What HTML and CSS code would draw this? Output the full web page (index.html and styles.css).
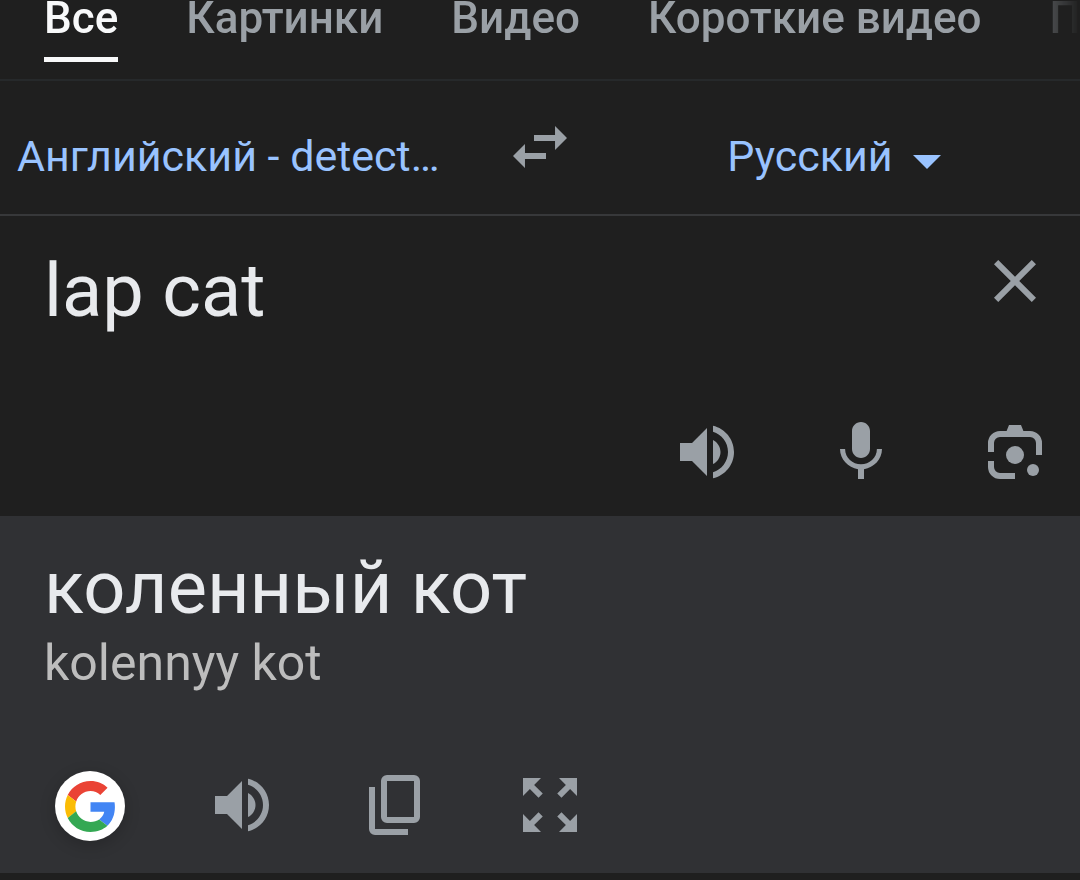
FILE: index.html
```html
<!DOCTYPE html>
<html lang="ru">
<head>
<meta charset="utf-8">
<meta name="viewport" content="width=device-width, initial-scale=1">
<title>lap cat</title>
<link rel="stylesheet" href="styles.css">
</head>
<body>
<nav class="tabs">
  <a class="tab tab-active" href="#" aria-current="page">Все</a>
  <a class="tab" href="#">Картинки</a>
  <a class="tab" href="#">Видео</a>
  <a class="tab" href="#">Короткие видео</a>
  <a class="tab" href="#">П</a>
</nav>
<main class="translator">
  <div class="languages">
    <button class="language language-source" type="button">Английский - detect…</button>
    <button class="icon-button" type="button" aria-label="Поменять языки">
      <svg class="icon" viewBox="0 0 24 24"><path d="M6.99 11L3 15l3.99 4v-3H14v-2H6.99v-3zM21 9l-3.99-4v3H10v2h7.01v3L21 9z"/></svg>
    </button>
    <button class="language language-target" type="button">Русский
      <svg class="caret" viewBox="0 0 28 14"><path d="M0 0h28L14 14z"/></svg>
    </button>
  </div>
  <section class="source">
    <div class="entry">
      <textarea class="source-text" rows="1" aria-label="Исходный текст" spellcheck="false">lap cat</textarea>
      <button class="icon-button" type="button" aria-label="Очистить">
        <svg class="icon" viewBox="0 0 24 24"><path d="M19 6.41L17.59 5 12 10.59 6.41 5 5 6.41 10.59 12 5 17.59 6.41 19 12 13.41 17.59 19 19 17.59 13.41 12z"/></svg>
      </button>
    </div>
    <div class="actions source-actions">
      <button class="icon-button" type="button" aria-label="Прослушать">
        <svg class="icon" viewBox="0 0 24 24"><path d="M3 9v6h4l5 5V4L7 9H3zm13.5 3c0-1.77-1.02-3.29-2.5-4.03v8.05c1.48-.73 2.5-2.25 2.5-4.02zM14 3.23v2.06c2.89.86 5 3.54 5 6.71s-2.11 5.85-5 6.71v2.06c4.01-.91 7-4.49 7-8.77s-2.99-7.86-7-8.77z"/></svg>
      </button>
      <button class="icon-button" type="button" aria-label="Голосовой ввод">
        <svg class="icon" viewBox="0 0 24 24"><path d="M12 14c1.66 0 3-1.34 3-3V5c0-1.66-1.34-3-3-3S9 3.34 9 5v6c0 1.66 1.34 3 3 3zm5.3-3c0 3-2.54 5.1-5.3 5.1S6.7 14 6.7 11H5c0 3.41 2.72 6.23 6 6.72V21h2v-3.28c3.28-.48 6-3.3 6-6.72h-1.7z"/></svg>
      </button>
      <button class="icon-button" type="button" aria-label="Камера">
        <svg class="icon" viewBox="0 0 24 24"><path class="icon-line" d="M4 12V9a3 3 0 0 1 3-3h10a3 3 0 0 1 3 3v4M4 15v2a3 3 0 0 0 3 3h5"/><path d="M9 5.5L10 3h4l1 2.5z"/><circle cx="12" cy="13" r="3"/><circle cx="18" cy="18" r="2"/></svg>
      </button>
    </div>
  </section>
  <section class="result">
    <p class="result-text">коленный кот</p>
    <p class="transliteration" lang="ru-Latn">kolennyy kot</p>
    <div class="result-actions">
      <button class="google-button" type="button" aria-label="Google">
        <svg class="google-logo" viewBox="0 0 48 48"><path fill="#ea4335" d="M24 9.5c3.54 0 6.71 1.22 9.21 3.6l6.85-6.85C35.9 2.38 30.47 0 24 0 14.62 0 6.51 5.38 2.56 13.22l7.98 6.19C12.43 13.72 17.74 9.5 24 9.5z"/><path fill="#4285f4" d="M46.98 24.55c0-1.57-.15-3.09-.38-4.55H24v9.02h12.94c-.58 2.96-2.26 5.48-4.78 7.18l7.73 6c4.51-4.18 7.09-10.36 7.09-17.65z"/><path fill="#fbbc05" d="M10.53 28.59c-.48-1.45-.76-2.99-.76-4.59s.27-3.14.76-4.59l-7.98-6.19C.92 16.46 0 20.12 0 24c0 3.88.92 7.54 2.56 10.78l7.97-6.19z"/><path fill="#34a853" d="M24 48c6.48 0 11.93-2.13 15.89-5.81l-7.73-6c-2.15 1.45-4.92 2.3-8.16 2.3-6.26 0-11.57-4.22-13.47-9.91l-7.98 6.19C6.51 42.62 14.62 48 24 48z"/></svg>
      </button>
      <div class="actions">
        <button class="icon-button" type="button" aria-label="Прослушать перевод">
          <svg class="icon" viewBox="0 0 24 24"><path d="M3 9v6h4l5 5V4L7 9H3zm13.5 3c0-1.77-1.02-3.29-2.5-4.03v8.05c1.48-.73 2.5-2.25 2.5-4.02zM14 3.23v2.06c2.89.86 5 3.54 5 6.71s-2.11 5.85-5 6.71v2.06c4.01-.91 7-4.49 7-8.77s-2.99-7.86-7-8.77z"/></svg>
        </button>
        <button class="icon-button" type="button" aria-label="Копировать">
          <svg class="icon" viewBox="0 0 24 24"><path fill-rule="evenodd" d="M9 2h9a2 2 0 0 1 2 2v12a2 2 0 0 1-2 2H9a2 2 0 0 1-2-2V4a2 2 0 0 1 2-2zm0 2v12h9V4zM3 6h2v14h11v2H5a2 2 0 0 1-2-2z"/></svg>
        </button>
        <button class="icon-button" type="button" aria-label="Во весь экран">
          <svg class="icon" viewBox="0 0 24 24"><path d="M15 3l2.3 2.3-2.89 2.87 1.42 1.42L18.7 6.7 21 9V3h-6zM3 9l2.3-2.3 2.87 2.89 1.42-1.42L6.7 5.3 9 3H3v6zm6 12l-2.3-2.3 2.89-2.87-1.42-1.42L5.3 17.3 3 15v6h6zm12-6l-2.3 2.3-2.87-2.89-1.42 1.42 2.89 2.87L15 21h6v-6z"/></svg>
        </button>
      </div>
    </div>
  </section>
</main>
</body>
</html>
```
FILE: styles.css
```css
* {
  box-sizing: border-box;
}

body {
  margin: 0;
  background: #1f1f1f;
  color: #e8eaed;
  font-family: Roboto, sans-serif;
}

button {
  margin: 0;
  padding: 0;
  border: 0;
  background: none;
  font: inherit;
  color: inherit;
}

.tabs {
  display: flex;
  gap: 68px;
  padding: 0 0 17px 44px;
  border-bottom: 2px solid #26292b;
  overflow: hidden;
  -webkit-mask-image: linear-gradient(to right, #000 calc(100% - 84px), transparent), linear-gradient(#000, #000);
  -webkit-mask-size: 100% calc(100% - 2px), 100% 2px;
  -webkit-mask-position: top, bottom;
  -webkit-mask-repeat: no-repeat;
}

.tab {
  padding-bottom: 21px;
  border-bottom: 5px solid transparent;
  color: #9aa0a6;
  font-size: 44px;
  font-weight: 500;
  line-height: 36px;
  white-space: nowrap;
  text-decoration: none;
}

.tab-active {
  border-color: #f8f9fa;
  color: #f8f9fa;
}

.languages {
  display: grid;
  grid-template-columns: 1fr 72px 1fr;
  align-items: start;
  padding: 30px 0 31px;
  border-bottom: 2px solid #37383a;
}

.language {
  padding-top: 19px;
  color: #99c3ff;
  font-size: 43px;
  line-height: 52px;
  white-space: nowrap;
}

.language-source {
  padding-left: 17px;
  text-align: left;
}

.language-target {
  display: flex;
  align-items: center;
  justify-content: center;
  gap: 20px;
  padding-left: 12px;
}

.caret {
  width: 28px;
  height: 14px;
  margin-top: 12px;
  fill: currentColor;
}

.icon-button {
  flex: none;
  width: 72px;
  height: 72px;
}

.icon {
  display: block;
  width: 72px;
  height: 72px;
  fill: #9aa0a6;
}

.icon-line {
  fill: none;
  stroke: #9aa0a6;
  stroke-width: 2;
}

.source {
  padding: 29px 29px 28px 44px;
}

.entry {
  display: flex;
  align-items: flex-start;
}

.source-text {
  flex: 1;
  min-width: 0;
  height: 100px;
  padding: 0;
  border: 0;
  outline: 0;
  background: none;
  resize: none;
  overflow: hidden;
  color: #e8eaed;
  font-family: inherit;
  font-size: 74px;
  line-height: 92px;
}

.actions {
  display: flex;
  gap: 82px;
}

.source-actions {
  justify-content: flex-end;
  margin-top: 71px;
}

.result {
  padding: 26px 44px 32px;
  background: #303134;
}

.result-text {
  margin: 0;
  font-size: 74px;
  line-height: 92px;
}

.transliteration {
  margin: 0;
  color: #bdbdbd;
  font-size: 50px;
  line-height: 58px;
}

.result-actions {
  display: flex;
  align-items: flex-end;
  gap: 81px;
  margin-top: 77px;
  padding-left: 11px;
}

.google-button {
  display: grid;
  place-items: center;
  width: 70px;
  height: 70px;
  border-radius: 50%;
  background: #fff;
  box-shadow: 0 4px 16px rgba(0, 0, 0, 0.2);
}

.google-logo {
  width: 51px;
  height: 51px;
}
```
